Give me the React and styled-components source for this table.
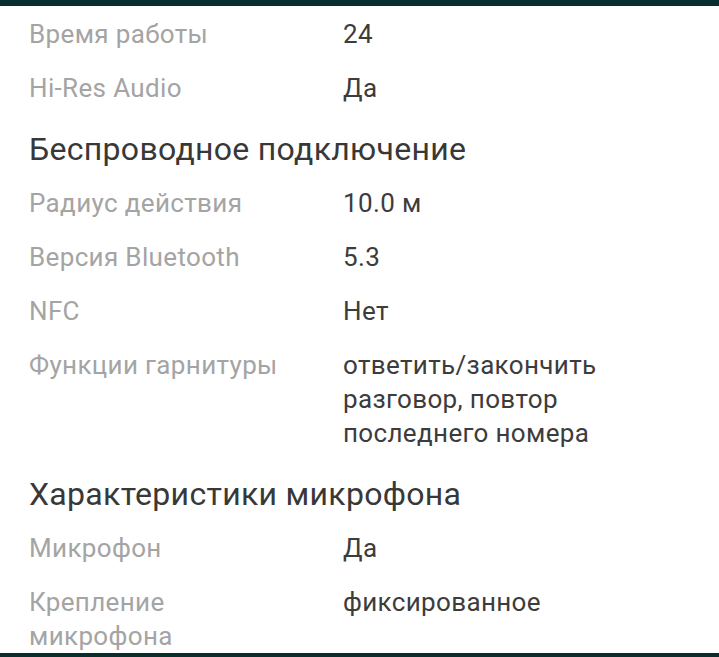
import React from "react";
import styled, { createGlobalStyle } from "styled-components";

const GlobalStyle = createGlobalStyle`
  html, body {
    margin: 0;
    padding: 0;
    background: #ffffff;
  }
  body {
    font-family: Roboto, "Noto Sans", "Liberation Sans", sans-serif;
  }
`;

const Screen = styled.div`
  width: 719px;
  height: 657px;
  display: flex;
  flex-direction: column;
  overflow: hidden;
  background: #ffffff;
`;

const Bar = styled.div`
  flex: 0 0 ${({ h }) => h}px;
  background: #062e2d;
`;

const Content = styled.div`
  flex: 1;
  overflow: hidden;
  padding: 1px 29px 0 29px;
`;

const SectionTitle = styled.h2`
  margin: 0;
  padding: 14px 0 7px;
  font-size: 32px;
  line-height: 40px;
  font-weight: 400;
  letter-spacing: 0.3px;
  color: #383838;
`;

const Row = styled.div`
  display: grid;
  grid-template-columns: 270px 1fr;
  column-gap: 44px;
  padding: 10px 0;
  font-size: 26px;
  line-height: 34px;
  letter-spacing: 0.35px;
`;

const Label = styled.div`
  color: #a4a4a4;
`;

const Value = styled.div`
  color: #3c3c3c;
`;

const sections = [
  {
    rows: [
      ["Время работы", "24"],
      ["Hi-Res Audio", "Да"],
    ],
  },
  {
    title: "Беспроводное подключение",
    rows: [
      ["Радиус действия", "10.0 м"],
      ["Версия Bluetooth", "5.3"],
      ["NFC", "Нет"],
      ["Функции гарнитуры", "ответить/закончить разговор, повтор последнего номера"],
    ],
  },
  {
    title: "Характеристики микрофона",
    rows: [
      ["Микрофон", "Да"],
      ["Крепление микрофона", "фиксированное"],
    ],
  },
];

const App = () => {
  return (
    <>
      <GlobalStyle />
      <Screen>
        <Bar h={6} />
        <Content>
          {sections.map((section, i) => (
            <React.Fragment key={i}>
              {section.title && <SectionTitle>{section.title}</SectionTitle>}
              {section.rows.map(([label, value]) => (
                <Row key={label}>
                  <Label>{label}</Label>
                  <Value>{value}</Value>
                </Row>
              ))}
            </React.Fragment>
          ))}
        </Content>
        <Bar h={4} />
      </Screen>
    </>
  );
};

export default App;
